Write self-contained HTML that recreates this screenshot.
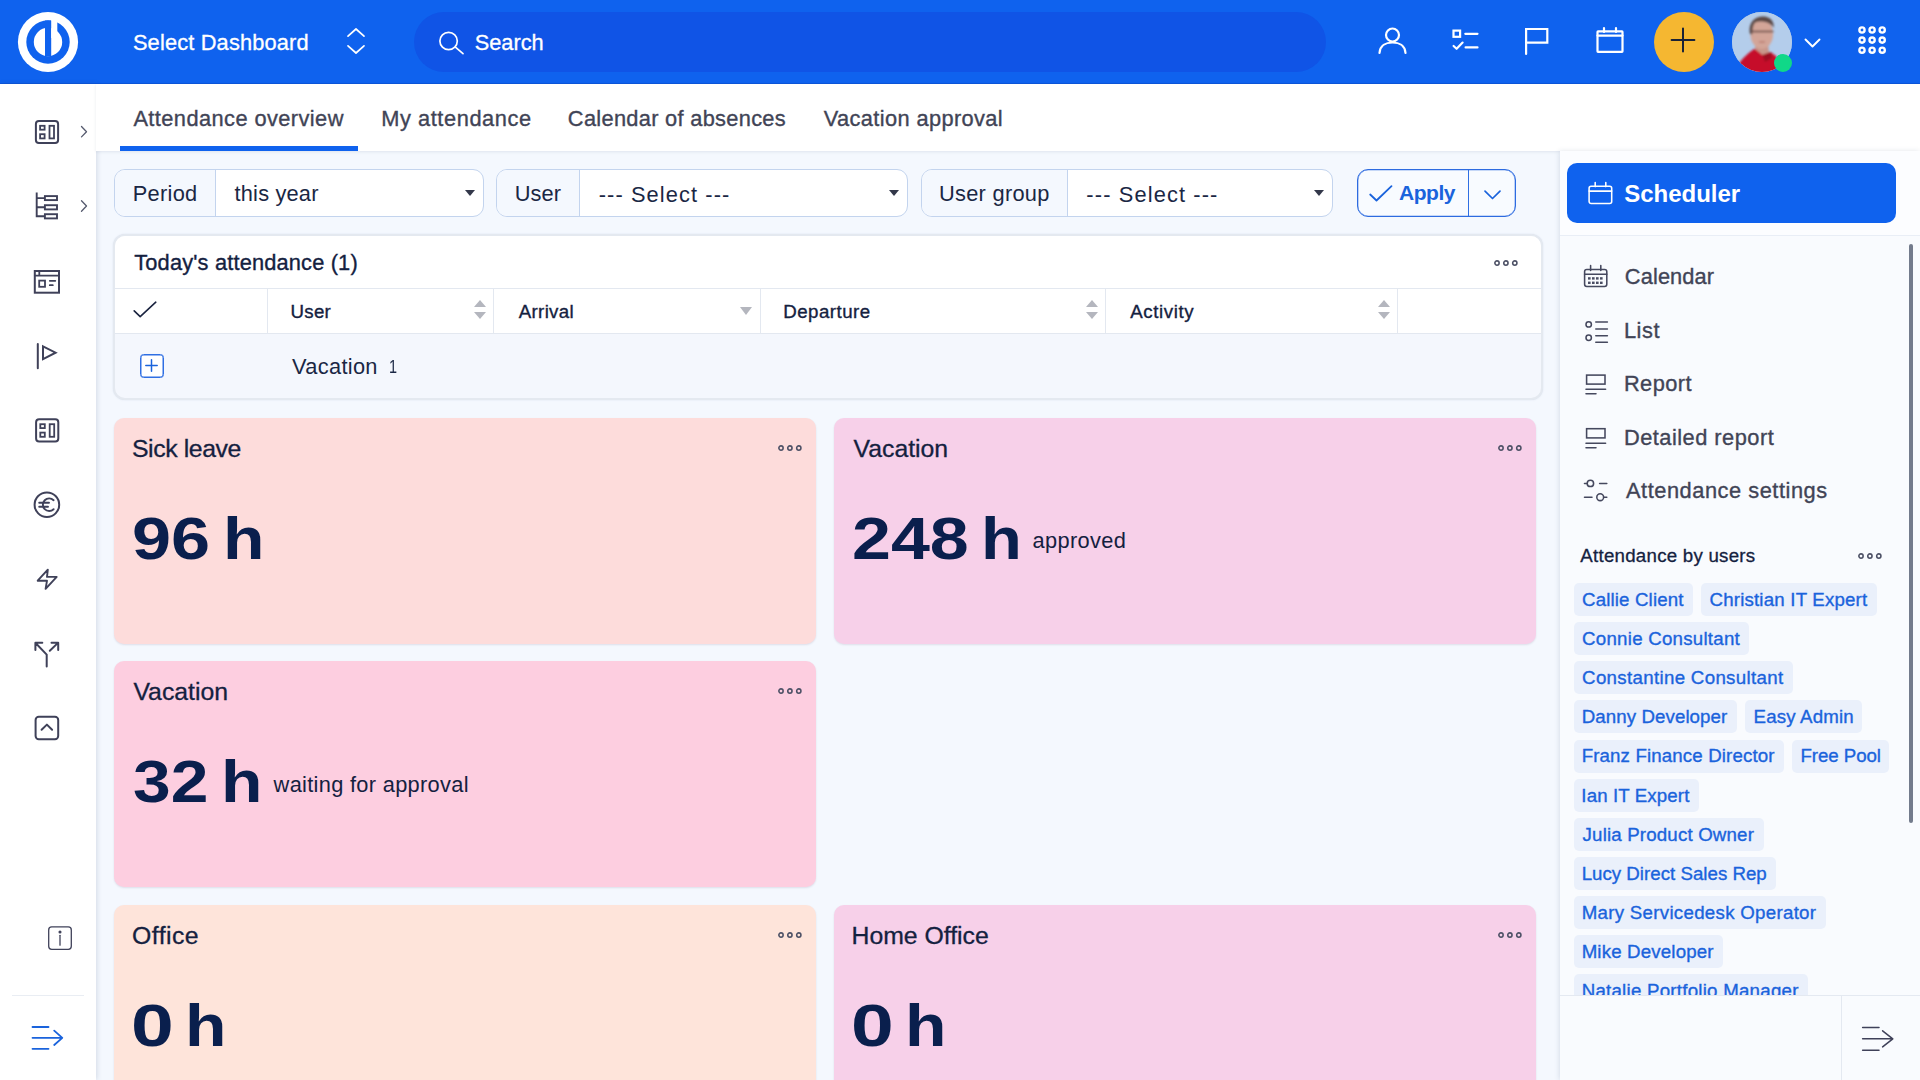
<!DOCTYPE html>
<html lang="en">
<head>
<meta charset="utf-8">
<title>Attendance overview</title>
<style>
*{box-sizing:border-box;margin:0;padding:0}
html,body{width:1920px;height:1080px;overflow:hidden;background:#f4f8fe;font-family:"Liberation Sans",Arial,sans-serif;color:#14213f}
svg{display:block;overflow:visible;position:absolute}
a{text-decoration:none}
h2,h3,h4{font-weight:normal}
.tx{position:absolute;white-space:nowrap;line-height:1;display:block;transform-origin:0 50%}
.hw{color:#fff;-webkit-text-stroke:.3px #fff}
.tab{color:#414456;-webkit-text-stroke:.35px #414456}
.ft{color:#1a2744}
.apply{color:#1a63dc;font-weight:bold}
.pt{color:#14213f;-webkit-text-stroke:.35px #14213f}
.th{color:#14213f;-webkit-text-stroke:.35px #14213f}
.td{color:#1a2744}
.ct{color:#14213f;-webkit-text-stroke:.3px #14213f}
.cn{color:#0a1f4d;font-weight:bold}
.cs{color:#14213f}
.sch{color:#fff;font-weight:bold}
.mi{color:#414456;-webkit-text-stroke:.35px #414456}
.abu{color:#14213f;-webkit-text-stroke:.3px #14213f}
.tg{color:#1a63dc;-webkit-text-stroke:.35px #1a63dc}
/* header */
#hdr{position:absolute;left:0;top:0;width:1920px;height:84px;background:#0f62ee;box-shadow:inset 0 -1px 0 rgba(0,30,130,.18)}
#hdr .search{position:absolute;left:414px;top:12px;width:912px;height:60px;border-radius:30px;background:#1054e6}
#hdr .plus{position:absolute;left:1654px;top:12px;width:60px;height:60px;border-radius:50%;background:#f5b731}
#hdr .avatar{position:absolute;left:1732px;top:12px;width:60px;height:60px;border-radius:50%;overflow:hidden;background:#a9c4e6}
#hdr .online{position:absolute;left:1774px;top:54px;width:18px;height:18px;border-radius:50%;background:#10d888}
/* left nav */
#lnav{position:absolute;left:0;top:84px;width:96px;height:996px;background:#fff;box-shadow:1px 0 5px rgba(40,60,100,.16)}
#lnav .sep{position:absolute;left:12px;top:911px;width:72px;height:1px;background:#e9edf3}
/* tabs */
#tabs{position:absolute;left:96px;top:84px;width:1824px;height:67px;background:#fff;box-shadow:0 1px 3px rgba(40,60,100,.10)}
#tabs .ul{position:absolute;left:24px;top:62px;width:238px;height:5px;background:#0f62ee}
/* filters */
.fbox{position:absolute;top:169px;height:48px;border:1px solid #c3d4ee;border-radius:11px;background:#fff;overflow:hidden}
.fbox .lab{position:absolute;left:0;top:0;bottom:0;background:#f4f8fe;border-right:1px solid #c3d4ee}
.fbox .car{position:absolute;top:19.8px;width:0;height:0;border-left:5.6px solid transparent;border-right:5.6px solid transparent;border-top:6.5px solid #33384a}
#applybtn{position:absolute;left:1357px;top:169px;width:158.5px;height:48px;border:1px solid #2d6be0;box-shadow:inset 0 0 0 .3px #2d6be0;border-radius:11px;background:#f8fbff}
#applybtn .dv{position:absolute;left:109.5px;top:0;width:1.5px;height:100%;background:#2f6fe3}
/* panel */
#panel{position:absolute;left:113px;top:234px;width:1429.5px;height:165.5px;border:2px solid #e4e9f0;border-radius:12px;background:#f4f7fd;box-shadow:0 0 1.5px rgba(120,140,170,.25);overflow:hidden}
#panel .head{position:absolute;left:0;top:0;width:100%;height:52px;background:#fff}
#panel .thead{position:absolute;left:0;top:52px;width:100%;height:46px;background:#fff;border-top:1px solid #e3e8f0;border-bottom:1px solid #e3e8f0}
#panel .cd{position:absolute;top:53px;width:1px;height:44px;background:#e3e8f0}
.sort{position:absolute;top:63.9px;width:0;height:0}
.sort:before,.sort:after{content:"";position:absolute;left:0;width:0;height:0;border-left:6.3px solid transparent;border-right:6.3px solid transparent}
.sort:before{top:0;border-bottom:7.6px solid #b4b6be}
.sort:after{top:12.1px;border-top:7.6px solid #b4b6be}
.sortd{position:absolute;top:70.6px;width:0;height:0;border-left:6.3px solid transparent;border-right:6.3px solid transparent;border-top:8.4px solid #b4b6be}
#plusbox{position:absolute;left:25px;top:117.8px;width:24px;height:24px;border:1px solid #2f6fe3;box-shadow:inset 0 0 0 .5px #2f6fe3;border-radius:3.5px;background:#fff}
/* cards */
.card{position:absolute;width:702px;border-radius:10px;box-shadow:0 1px 2px rgba(60,40,80,.12)}
/* right sidebar */
#rside{position:absolute;left:1560px;top:151px;width:360px;height:929px;background:#f9fbfe;box-shadow:-1px 0 5px rgba(40,60,100,.13)}
#rside .topbg{position:absolute;left:0;top:0;width:360px;height:84.5px;background:#fcfdff;border-bottom:1px solid #e9eef6}
#sched{position:absolute;left:7px;top:12px;width:329px;height:60px;border-radius:10px;background:#0f62ee}
#rside .scroll{position:absolute;left:349.3px;top:93px;width:3.5px;height:579px;background:#737b8c;border-radius:2px}
.tag{position:absolute;height:32.6px;border-radius:5px;background:#eaf0fb}
#rfoot{position:absolute;left:0;top:844px;width:360px;height:85px;background:#f9fbfe;border-top:1px solid #e4e9f1}
#rfoot .v{position:absolute;left:281px;top:0;width:1px;height:85px;background:#e4e9f1}
</style>
</head>
<body>
<header id="hdr">
  <svg style="left:18px;top:12px" width="60" height="60" viewBox="0 0 60 60"><circle cx="30" cy="30" r="30.1" fill="#fff"/><circle cx="30" cy="30" r="21.7" fill="#0f62ee"/><circle cx="30" cy="30" r="14.2" fill="#fff"/><rect x="27" y="8.5" width="6.2" height="36" fill="#0f62ee"/><rect x="33.2" y="4" width="6.1" height="22" fill="#fff"/></svg>
  <div id="h1" class="tx hw" style="left:132.93px;top:31.75px;font-size:21.8px;letter-spacing:0.163px">Select Dashboard</div>
  <svg style="left:347px;top:27.5px" width="18" height="26" viewBox="0 0 18 26" fill="none" stroke="#fff" stroke-width="1.7" stroke-linecap="round" stroke-linejoin="round"><path d="M1 8.2 L9 1 L17 8.2"/><path d="M1 17.8 L9 25 L17 17.8"/></svg>
  <div class="search">
    <svg style="left:24px;top:19px" width="27" height="24" viewBox="0 0 27 24" fill="none" stroke="#fff" stroke-width="1.7" stroke-linecap="round"><circle cx="10.6" cy="10" r="8.7"/><path d="M17.4 16.2 L25 22.6"/></svg>
    <span id="h2" class="tx hw" style="left:60.77px;top:19.75px;font-size:21.8px;letter-spacing:-0.040px">Search</span>
  </div>
  <svg style="left:1378px;top:27px" width="29" height="28" viewBox="0 0 29 28" fill="none" stroke="#fff" stroke-width="2.2" stroke-linecap="round"><circle cx="14.5" cy="8" r="6.5"/><path d="M1.5 26 C2 18.5 8 15.5 14.5 15.5 C21 15.5 27 18.5 27.5 26"/></svg>
  <svg style="left:1451px;top:29px" width="28" height="22" viewBox="0 0 28 22" fill="none" stroke="#fff" stroke-width="2.2" stroke-linecap="round" stroke-linejoin="round"><rect x="2.5" y="1.6" width="6.6" height="6.2" stroke-linejoin="miter"/><path d="M14.3 4.8 H26.5"/><path d="M2.6 17 L5.6 19.8 L11.6 13.6"/><path d="M14.6 18.4 H26.5"/></svg>
  <svg style="left:1524px;top:27px" width="26" height="28" viewBox="0 0 26 28" fill="none" stroke="#fff" stroke-width="2.2" stroke-linecap="round" stroke-linejoin="miter"><path d="M2.1 27 V2 H23.3 V15.6 H2.1"/></svg>
  <svg style="left:1596px;top:27px" width="28" height="27" viewBox="0 0 28 27" fill="none" stroke="#fff" stroke-width="2.2" stroke-linecap="round"><rect x="1.5" y="4.4" width="25" height="20.4" rx=".5"/><path d="M1.5 8.6 H26.5"/><path d="M8 1 V5"/><path d="M20 1 V5"/></svg>
  <div class="plus"><svg style="left:16px;top:15.4px" width="26" height="26" viewBox="0 0 26 26" fill="none" stroke="#1a2236" stroke-width="2" stroke-linecap="round"><path d="M13 1.6 V24.4 M1.6 13 H24.4"/></svg></div>
  <div class="avatar">
    <svg width="60" height="60" viewBox="0 0 60 60"><defs><filter id="bl" x="-10%" y="-10%" width="120%" height="120%"><feGaussianBlur stdDeviation="0.9"/></filter></defs><rect width="60" height="60" fill="#b4cdeb"/><g filter="url(#bl)"><path d="M23 33 L36 33 L38 47 L24 47 Z" fill="#c8968a"/><path d="M6 53 C11 45 17 41 22.5 36.5 L30.5 43 L38.5 40 L44.5 44.5 L47 63 L8 63 Z" fill="#c60f2b"/><path d="M30.5 43 L38.5 40 L40 46 L33 50 Z" fill="#9d0c22"/><ellipse cx="29.8" cy="22" rx="11.3" ry="14.8" fill="#d3a598"/><path d="M18 22 C15.5 8 26 3.4 33 4.6 C39.5 5.8 42.5 11 41.6 16 C38 9.5 28 8.2 22.6 11 C20.6 14 20.6 18 20.2 22.5 Z" fill="#5b4a46"/><path d="M19.5 19.5 H41.5" stroke="#6e4e48" stroke-width="1.7"/><path d="M27 30 H33" stroke="#b9776c" stroke-width="1.4"/></g></svg>
  </div>
  <div class="online"></div>
  <svg style="left:1804px;top:38px" width="17" height="10" viewBox="0 0 17 10" fill="none" stroke="#fff" stroke-width="1.9" stroke-linecap="round" stroke-linejoin="round"><path d="M1.5 1.5 L8.5 8.5 L15.5 1.5"/></svg>
  <svg style="left:1858px;top:26.2px" width="29" height="29" viewBox="0 0 29 29" fill="none" stroke="#fff" stroke-width="2.4"><circle cx="4" cy="4" r="2.6"/><circle cx="14.1" cy="4" r="2.6"/><circle cx="24.2" cy="4" r="2.6"/><circle cx="4" cy="14.1" r="2.6"/><circle cx="14.1" cy="14.1" r="2.6"/><circle cx="24.2" cy="14.1" r="2.6"/><circle cx="4" cy="24.2" r="2.6"/><circle cx="14.1" cy="24.2" r="2.6"/><circle cx="24.2" cy="24.2" r="2.6"/></svg>
</header>
<nav id="lnav">
  <svg style="left:0;top:0" width="96" height="996" viewBox="0 84 96 996" fill="none" stroke="#3f4159" stroke-width="2" stroke-linecap="round" stroke-linejoin="round">
    <g id="ic-dash"><rect x="35.9" y="120.9" width="22.2" height="22.2" rx="3"/><rect x="40.1" y="125.8" width="4.5" height="3.9" stroke-width="1.8" stroke-linejoin="miter"/><rect x="40.1" y="134.2" width="4.5" height="4.2" stroke-width="1.8" stroke-linejoin="miter"/><rect x="49.5" y="125.8" width="4.5" height="12.6" stroke-width="1.8" stroke-linejoin="miter"/></g>
    <path d="M81.5 126.5 L86.5 131.7 L81.5 136.9" stroke="#555a6e" stroke-width="1.3"/>
    <g stroke-width="1.9" stroke-linejoin="miter" stroke-linecap="butt"><path d="M36.7 192.5 V216.3 H44.5 M36.7 198.1 H44.5 M36.7 207.3 H44.5"/><rect x="44.9" y="196.1" width="12.1" height="4"/><rect x="44.9" y="205.2" width="12.1" height="4.2"/><rect x="44.9" y="214.2" width="12.1" height="4.2"/></g>
    <path d="M81.5 200.8 L86.5 206 L81.5 211.2" stroke="#555a6e" stroke-width="1.3"/>
    <g stroke-linejoin="miter"><rect x="34.8" y="271" width="24.2" height="21.7"/><path d="M34.8 275.6 H59 M39.3 271 V275.6" stroke-width="1.8"/><rect x="39.2" y="280.6" width="5.8" height="6.2" stroke-width="1.8"/><path d="M49.8 280.8 H55.3 M49.8 285.2 H52.8" stroke-width="1.8"/></g>
    <path d="M37.8 344 V368.3"/><path d="M43 346.3 L55.6 352.7 L43 359.2 Z" stroke-linejoin="miter"/>
    <g transform="translate(.2 298.4)"><rect x="35.9" y="120.9" width="22.2" height="22.2" rx="3"/><rect x="40.1" y="125.8" width="4.5" height="3.9" stroke-width="1.8" stroke-linejoin="miter"/><rect x="40.1" y="134.2" width="4.5" height="4.2" stroke-width="1.8" stroke-linejoin="miter"/><rect x="49.5" y="125.8" width="4.5" height="12.6" stroke-width="1.8" stroke-linejoin="miter"/></g>
    <circle cx="46.9" cy="504.7" r="12.3"/><path d="M53.6 500.2 A6.3 6.3 0 1 0 53.6 509.2 M39.2 502.7 H49 M39.2 506.8 H48" stroke-width="1.9"/>
    <path d="M47.8 569.6 L37.7 580.7 H47 L45.6 588.8 L56.7 576.9 H47 Z" stroke-width="1.9"/>
    <path d="M46.7 666.6 V654.6 L35.6 643 M35.4 650 V642.8 H42.3 M49.8 650.7 L58 642.9 M51.5 642.8 H58.2 V650"/>
    <rect x="35.6" y="716.8" width="22.6" height="22.5" rx="3.2"/><path d="M41.6 729.8 L46.9 724.6 L52.1 729.8"/>
    <g stroke-width="1.3"><rect x="48.7" y="926.9" width="22.6" height="22.4" rx="3"/><path d="M60 935.3 V945.2"/><circle cx="60" cy="932" r=".9" fill="#3f4159"/></g>
    <path d="M32.5 1027 H48.5 M32.5 1037.8 H62 M32.5 1048.8 H48.5 M54.2 1030.6 L62.3 1037.8 L54.2 1045" stroke="#1a63dc" stroke-width="1.8"/>
  </svg>
  <div class="sep"></div>
</nav>
<nav id="tabs">
  <a id="tb1" class="tx tab" style="left:37.41px;top:23.55px;font-size:21.8px;letter-spacing:0.424px">Attendance overview</a>
  <a id="tb2" class="tx tab" style="left:285.17px;top:23.55px;font-size:21.8px;letter-spacing:0.581px">My attendance</a>
  <a id="tb3" class="tx tab" style="left:471.86px;top:23.55px;font-size:21.8px;letter-spacing:0.304px">Calendar of absences</a>
  <a id="tb4" class="tx tab" style="left:727.75px;top:23.55px;font-size:21.8px;letter-spacing:0.379px">Vacation approval</a>
  <div class="ul"></div>
</nav>
<section id="filters">
  <div class="fbox" style="left:114px;width:370px"><div class="lab" style="width:100.5px"></div><span id="f1" class="tx ft" style="left:17.68px;top:12.65px;font-size:21.8px;letter-spacing:0.299px">Period</span><span id="f2" class="tx ft" style="left:119.59px;top:12.55px;font-size:21.8px;letter-spacing:0.183px">this year</span><i class="car" style="left:349.5px"></i></div>
  <div class="fbox" style="left:496px;width:412px"><div class="lab" style="width:83px"></div><span id="f3" class="tx ft" style="left:17.74px;top:12.65px;font-size:21.8px;letter-spacing:0.061px">User</span><span id="f4" class="tx ft" style="left:101.70px;top:13.75px;font-size:21.8px;letter-spacing:1.109px">--- Select ---</span><i class="car" style="left:391.9px"></i></div>
  <div class="fbox" style="left:920.5px;width:412.5px"><div class="lab" style="width:146.0px"></div><span id="f5" class="tx ft" style="left:17.43px;top:12.65px;font-size:21.8px;letter-spacing:0.296px">User group</span><span id="f6" class="tx ft" style="left:164.87px;top:13.75px;font-size:21.8px;letter-spacing:1.137px">--- Select ---</span><i class="car" style="left:392.20000000000005px"></i></div>
  <div id="applybtn"><svg style="left:11px;top:14.5px" width="24" height="17" viewBox="0 0 24 17" fill="none" stroke="#1a63dc" stroke-width="1.8" stroke-linecap="round" stroke-linejoin="round"><path d="M1.2 9.5 L7.5 15.5 L22.5 1.2"/></svg><span id="f7" class="tx apply" style="left:40.98px;top:11.92px;font-size:21px;letter-spacing:-0.470px">Apply</span><i class="dv"></i><svg style="left:126px;top:19.5px" width="17" height="10" viewBox="0 0 17 10" fill="none" stroke="#1a63dc" stroke-width="1.7" stroke-linecap="round" stroke-linejoin="round"><path d="M1 1.2 L8.5 8.5 L16 1.2"/></svg></div>
</section>
<section id="panel">
  <div class="head"><h2 id="p1" class="tx pt" style="left:19.28px;top:16.05px;font-size:21.8px;letter-spacing:0.169px">Today's attendance (1)</h2><svg class="dots" style="left:1379.2px;top:23.5px" width="24" height="6" viewBox="0 0 24 6" fill="none" stroke="#4c5065" stroke-width="1.55"><circle cx="3" cy="3" r="2.15"/><circle cx="11.9" cy="3" r="2.15"/><circle cx="20.8" cy="3" r="2.15"/></svg></div>
  <div class="thead"></div>
  <svg style="left:18px;top:65px" width="24" height="17" viewBox="0 0 24 17" fill="none" stroke="#1b2440" stroke-width="1.6" stroke-linecap="round" stroke-linejoin="round"><path d="M1.2 9.8 L7.2 15.6 L22.8 1.2"/></svg>
  <i class="cd" style="left:152px"></i><span id="p2" class="tx th" style="left:175.61px;top:67.07px;font-size:18.7px;letter-spacing:0.252px">User</span><i class="sort" style="left:359.3px"></i>
  <i class="cd" style="left:377.5px"></i><span id="p3" class="tx th" style="left:403.85px;top:67.07px;font-size:18.7px;letter-spacing:0.291px">Arrival</span><i class="sortd" style="left:625px"></i>
  <i class="cd" style="left:644.5px"></i><span id="p4" class="tx th" style="left:668.25px;top:67.07px;font-size:18.7px;letter-spacing:0.483px">Departure</span><i class="sort" style="left:971px"></i>
  <i class="cd" style="left:990px"></i><span id="p5" class="tx th" style="left:1015.20px;top:67.07px;font-size:18.7px;letter-spacing:0.609px">Activity</span><i class="sort" style="left:1262.7px"></i>
  <i class="cd" style="left:1282px"></i>
  <div id="plusbox"><svg style="left:4px;top:4px" width="13" height="13" viewBox="0 0 13 13" fill="none" stroke="#1a63dc" stroke-width="1.5" stroke-linecap="round"><path d="M6.5 .8 V12.2 M.8 6.5 H12.2"/></svg></div>
  <span id="p6" class="tx td" style="left:177.02px;top:120.25px;font-size:21.8px;letter-spacing:0.324px">Vacation</span><span id="p7" class="tx td dg" style="left:274.23px;top:122.47px;font-size:18.7px;letter-spacing:0.000px;transform:scaleX(0.7749)">1</span>
</section>
<main id="cards">
<article class="card" style="left:114px;top:417.5px;height:226px;background:#fddcdb"><h3 id="c1t" class="tx ct" style="left:17.98px;top:19.71px;font-size:24.8px;letter-spacing:-0.398px">Sick leave</h3><div class="num"><span id="c1n" class="tx cn dg" style="left:18.25px;top:92.23px;font-size:58.8px;letter-spacing:0.000px;transform:scaleX(1.1946)">96</span> <span id="c1h" class="tx cn dg" style="left:108.79px;top:92.23px;font-size:58.8px;letter-spacing:0.000px;transform:scaleX(1.1541)">h</span></div><svg class="dots" style="left:663.6px;top:27.3px" width="24" height="6" viewBox="0 0 24 6" fill="none" stroke="#4c5065" stroke-width="1.55"><circle cx="3" cy="3" r="2.15"/><circle cx="11.9" cy="3" r="2.15"/><circle cx="20.8" cy="3" r="2.15"/></svg></article>
<article class="card" style="left:834px;top:417.5px;height:226px;background:#f7d0e9"><h3 id="c2t" class="tx ct" style="left:19.61px;top:19.71px;font-size:24.8px;letter-spacing:-0.023px">Vacation</h3><div class="num"><span id="c2n" class="tx cn dg" style="left:18.25px;top:92.23px;font-size:58.8px;letter-spacing:0.000px;transform:scaleX(1.1904)">248</span> <span id="c2h" class="tx cn dg" style="left:147.00px;top:92.23px;font-size:58.8px;letter-spacing:0.000px;transform:scaleX(1.1375)">h</span></div><span id="c2s" class="tx cs" style="left:198.46px;top:112.80px;font-size:21.8px;letter-spacing:0.356px">approved</span><svg class="dots" style="left:663.6px;top:27.3px" width="24" height="6" viewBox="0 0 24 6" fill="none" stroke="#4c5065" stroke-width="1.55"><circle cx="3" cy="3" r="2.15"/><circle cx="11.9" cy="3" r="2.15"/><circle cx="20.8" cy="3" r="2.15"/></svg></article>
<article class="card" style="left:114px;top:661px;height:226px;background:#fdcee0"><h3 id="c3t" class="tx ct" style="left:19.42px;top:19.21px;font-size:24.8px;letter-spacing:-0.001px">Vacation</h3><div class="num"><span id="c3n" class="tx cn dg" style="left:19.24px;top:91.73px;font-size:58.8px;letter-spacing:0.000px;transform:scaleX(1.1521)">32</span> <span id="c3h" class="tx cn dg" style="left:106.79px;top:91.73px;font-size:58.8px;letter-spacing:0.000px;transform:scaleX(1.1541)">h</span></div><span id="c3s" class="tx cs" style="left:159.60px;top:112.80px;font-size:21.8px;letter-spacing:0.310px">waiting for approval</span><svg class="dots" style="left:663.6px;top:27.3px" width="24" height="6" viewBox="0 0 24 6" fill="none" stroke="#4c5065" stroke-width="1.55"><circle cx="3" cy="3" r="2.15"/><circle cx="11.9" cy="3" r="2.15"/><circle cx="20.8" cy="3" r="2.15"/></svg></article>
<article class="card" style="left:114px;top:905px;height:226px;background:#fee4da"><h3 id="c4t" class="tx ct" style="left:18.05px;top:18.96px;font-size:24.8px;letter-spacing:0.428px">Office</h3><div class="num"><span id="c4n" class="tx cn dg" style="left:17.33px;top:91.98px;font-size:58.8px;letter-spacing:0.000px;transform:scaleX(1.3074)">0</span> <span id="c4h" class="tx cn dg" style="left:71.29px;top:91.98px;font-size:58.8px;letter-spacing:0.000px;transform:scaleX(1.1544)">h</span></div><svg class="dots" style="left:663.6px;top:27.3px" width="24" height="6" viewBox="0 0 24 6" fill="none" stroke="#4c5065" stroke-width="1.55"><circle cx="3" cy="3" r="2.15"/><circle cx="11.9" cy="3" r="2.15"/><circle cx="20.8" cy="3" r="2.15"/></svg></article>
<article class="card" style="left:834px;top:905px;height:226px;background:#f7d0e9"><h3 id="c5t" class="tx ct" style="left:17.53px;top:18.96px;font-size:24.8px;letter-spacing:-0.017px">Home Office</h3><div class="num"><span id="c5n" class="tx cn dg" style="left:17.33px;top:91.98px;font-size:58.8px;letter-spacing:0.000px;transform:scaleX(1.3066)">0</span> <span id="c5h" class="tx cn dg" style="left:71.29px;top:91.98px;font-size:58.8px;letter-spacing:0.000px;transform:scaleX(1.1542)">h</span></div><svg class="dots" style="left:663.6px;top:27.3px" width="24" height="6" viewBox="0 0 24 6" fill="none" stroke="#4c5065" stroke-width="1.55"><circle cx="3" cy="3" r="2.15"/><circle cx="11.9" cy="3" r="2.15"/><circle cx="20.8" cy="3" r="2.15"/></svg></article>
</main>
<aside id="rside">
  <div class="topbg"></div>
  <div id="sched"><svg style="left:20.5px;top:18.5px" width="26" height="24" viewBox="0 0 26 24" fill="none" stroke="#fff" stroke-width="1.55" stroke-linecap="round" stroke-linejoin="round"><rect x="1.1" y="4.3" width="22.6" height="17.2" rx="2"/><path d="M1.1 9.1 H23.7 M7.2 .5 V4.6 M17.8 .5 V4.6"/></svg><span id="r0" class="tx sch" style="left:57.31px;top:19.08px;font-size:24px;letter-spacing:-0.026px">Scheduler</span></div>
  <svg style="left:0;top:0" width="360" height="400" viewBox="1560 151 360 400" fill="none" stroke="#45485e" stroke-width="1.55" stroke-linecap="round" stroke-linejoin="round">
    <g><rect x="1584.6" y="269.4" width="22.2" height="17" rx="2.2"/><path d="M1584.6 274.3 H1606.8 M1590.6 265.5 V270.5 M1600.8 265.5 V270.5"/><g fill="#4a4d63" stroke="none"><rect x="1588" y="277.2" width="2.6" height="2.4"/><rect x="1592" y="277.2" width="2.6" height="2.4"/><rect x="1596" y="277.2" width="2.6" height="2.4"/><rect x="1600" y="277.2" width="2.6" height="2.4"/><rect x="1588" y="281.6" width="2.6" height="2.4"/><rect x="1592" y="281.6" width="2.6" height="2.4"/><rect x="1596" y="281.6" width="2.6" height="2.4"/><rect x="1600" y="281.6" width="2.6" height="2.4"/></g></g>
    <g><circle cx="1588.7" cy="324.4" r="2.7"/><circle cx="1588.7" cy="337.7" r="2.7"/><path d="M1595.8 322 H1607.4 M1595.8 329 H1607.4 M1595.8 335.7 H1607.4 M1595.8 342.2 H1607.4"/></g>
    <g stroke-linejoin="miter"><rect x="1586.6" y="375.1" width="18.4" height="9"/><path d="M1586 389.2 H1605.6 M1586 393.7 H1596"/></g>
    <g stroke-linejoin="miter"><rect x="1586.6" y="428.7" width="18.4" height="9.2"/><path d="M1586 443.2 H1605.6 M1586 447.7 H1596"/></g>
    <g><circle cx="1590.4" cy="483.4" r="3.2"/><path d="M1584.5 483.4 H1587 M1599.6 483.4 H1606.8"/><circle cx="1600.2" cy="497.2" r="3.4"/><path d="M1584.5 497.2 H1592 M1603.8 497.2 H1606.8"/></g>
  </svg>
  <a id="r1" class="tx mi" style="left:64.82px;top:114.55px;font-size:21.8px;letter-spacing:0.121px">Calendar</a><a id="r2" class="tx mi" style="left:63.93px;top:168.95px;font-size:21.8px;letter-spacing:0.557px">List</a><a id="r3" class="tx mi" style="left:63.93px;top:222.25px;font-size:21.8px;letter-spacing:0.440px">Report</a><a id="r4" class="tx mi" style="left:63.93px;top:275.55px;font-size:21.8px;letter-spacing:0.488px">Detailed report</a><a id="r5" class="tx mi" style="left:65.97px;top:328.85px;font-size:21.8px;letter-spacing:0.541px">Attendance settings</a>
  <div class="scroll"></div>
  <h4 id="r6" class="tx abu" style="left:20.35px;top:396.07px;font-size:18.7px;letter-spacing:0.247px">Attendance by users</h4><svg class="dots" style="left:298px;top:401.5px" width="24" height="6" viewBox="0 0 24 6" fill="none" stroke="#4c5065" stroke-width="1.55"><circle cx="3" cy="3" r="2.15"/><circle cx="11.9" cy="3" r="2.15"/><circle cx="20.8" cy="3" r="2.15"/></svg>
  <div id="tags">
    <div class="tag" style="left:13.9px;top:432.0px;width:119.1px"><a id="g1" class="tx tg" style="left:8.21px;top:8.17px;font-size:18.7px;letter-spacing:0.135px">Callie Client</a></div>
    <div class="tag" style="left:141.0px;top:432.0px;width:175.8px"><a id="g2" class="tx tg" style="left:8.46px;top:8.17px;font-size:18.7px;letter-spacing:0.187px">Christian IT Expert</a></div>
    <div class="tag" style="left:13.9px;top:471.0px;width:175.4px"><a id="g3" class="tx tg" style="left:8.21px;top:8.47px;font-size:18.7px;letter-spacing:0.242px">Connie Consultant</a></div>
    <div class="tag" style="left:13.9px;top:510.0px;width:218.9px"><a id="g4" class="tx tg" style="left:8.21px;top:8.07px;font-size:18.7px;letter-spacing:0.321px">Constantine Consultant</a></div>
    <div class="tag" style="left:13.9px;top:549.0px;width:162.8px"><a id="g5" class="tx tg" style="left:7.75px;top:8.17px;font-size:18.7px;letter-spacing:0.090px">Danny Developer</a></div>
    <div class="tag" style="left:185.4px;top:549.0px;width:116.8px"><a id="g6" class="tx tg" style="left:8.11px;top:8.17px;font-size:18.7px;letter-spacing:0.164px">Easy Admin</a></div>
    <div class="tag" style="left:13.9px;top:589.0px;width:210.2px"><a id="g7" class="tx tg" style="left:7.75px;top:7.47px;font-size:18.7px;letter-spacing:0.136px">Franz Finance Director</a></div>
    <div class="tag" style="left:232.4px;top:589.0px;width:97.1px"><a id="g8" class="tx tg" style="left:8.11px;top:7.47px;font-size:18.7px;letter-spacing:-0.067px">Free Pool</a></div>
    <div class="tag" style="left:13.9px;top:628.0px;width:125.0px"><a id="g9" class="tx tg" style="left:7.46px;top:7.67px;font-size:18.7px;letter-spacing:0.114px">Ian IT Expert</a></div>
    <div class="tag" style="left:13.9px;top:667.0px;width:189.8px"><a id="g10" class="tx tg" style="left:8.72px;top:7.67px;font-size:18.7px;letter-spacing:0.166px">Julia Product Owner</a></div>
    <div class="tag" style="left:13.9px;top:706.0px;width:202.1px"><a id="g11" class="tx tg" style="left:7.75px;top:7.77px;font-size:18.7px;letter-spacing:0.011px">Lucy Direct Sales Rep</a></div>
    <div class="tag" style="left:13.9px;top:745.0px;width:252.0px"><a id="g12" class="tx tg" style="left:7.75px;top:7.77px;font-size:18.7px;letter-spacing:0.289px">Mary Servicedesk Operator</a></div>
    <div class="tag" style="left:13.9px;top:784.0px;width:149.4px"><a id="g13" class="tx tg" style="left:7.75px;top:7.87px;font-size:18.7px;letter-spacing:0.162px">Mike Developer</a></div>
    <div class="tag" style="left:13.9px;top:823.0px;width:234.2px"><a id="g14" class="tx tg" style="left:7.75px;top:7.97px;font-size:18.7px;letter-spacing:0.245px">Natalie Portfolio Manager</a></div>
  </div>
  <div id="rfoot"><i class="v"></i><svg style="left:300px;top:28px" width="36" height="28" viewBox="1860 1023 36 28" fill="none" stroke="#3f4159" stroke-width="1.5" stroke-linecap="round" stroke-linejoin="round"><path d="M1862.6 1026.5 H1879 M1862.6 1037.8 H1892.6 M1862.6 1049.2 H1879 M1882.6 1029.8 L1892.8 1037.8 L1882.6 1045.9"/></svg></div>
</aside>
</body>
</html>
